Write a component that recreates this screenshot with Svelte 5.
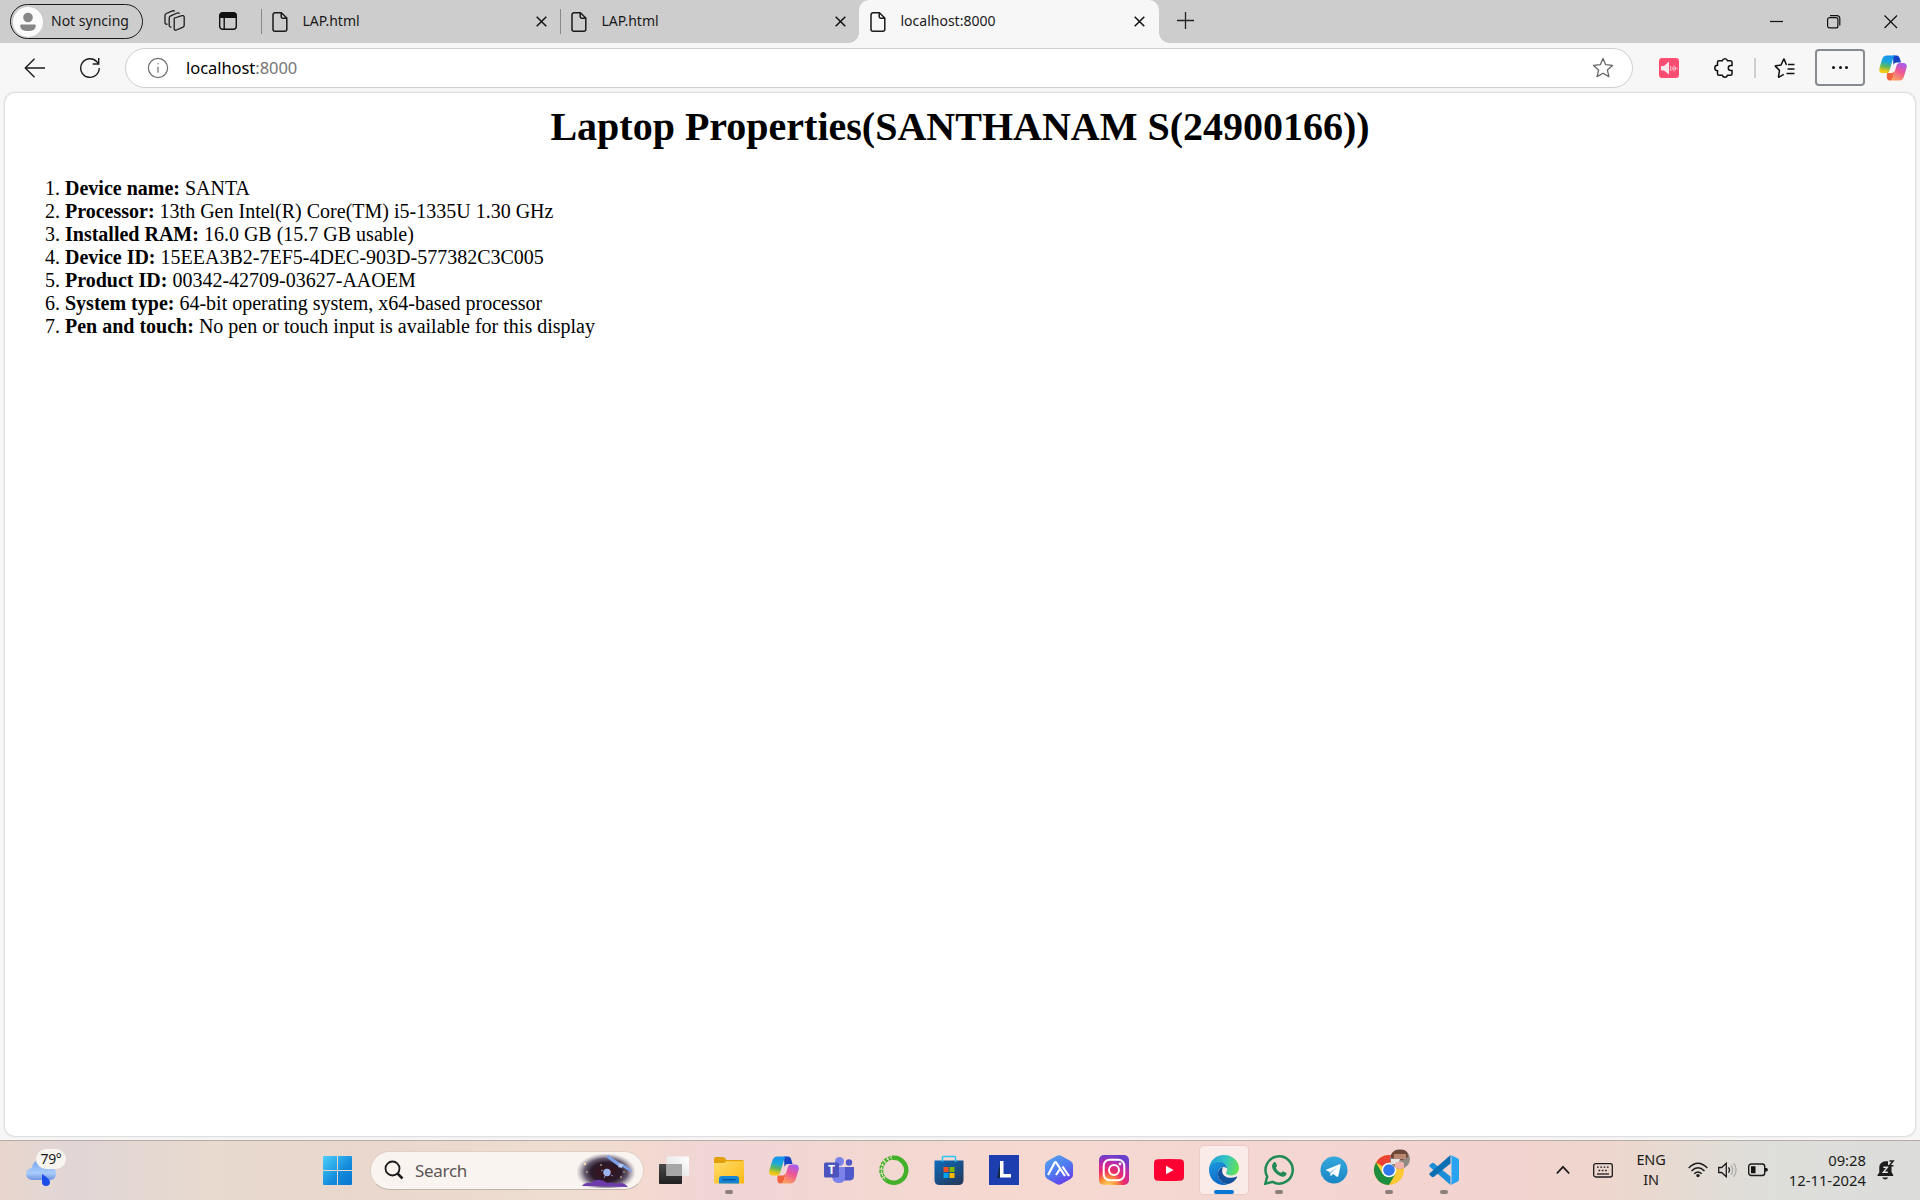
<script>
  const tabs = [
    { title: 'LAP.html', active: false },
    { title: 'LAP.html', active: false },
    { title: 'localhost:8000', active: true }
  ];

  const properties = [
    ['Device name:', 'SANTA'],
    ['Processor:', '13th Gen Intel(R) Core(TM) i5-1335U 1.30 GHz'],
    ['Installed RAM:', '16.0 GB (15.7 GB usable)'],
    ['Device ID:', '15EEA3B2-7EF5-4DEC-903D-577382C3C005'],
    ['Product ID:', '00342-42709-03627-AAOEM'],
    ['System type:', '64-bit operating system, x64-based processor'],
    ['Pen and touch:', 'No pen or touch input is available for this display']
  ];

  const apps = [
    { name: 'taskview' },
    { name: 'explorer', running: true },
    { name: 'copilot' },
    { name: 'teams' },
    { name: 'anaconda' },
    { name: 'store' },
    { name: 'letter' },
    { name: 'peak' },
    { name: 'instagram' },
    { name: 'youtube' },
    { name: 'edge', focused: true },
    { name: 'whatsapp', running: true },
    { name: 'telegram' },
    { name: 'chrome', running: true },
    { name: 'vscode', running: true }
  ];
</script>

{#snippet copilot(id)}
  <svg class="copilot" viewBox="0 0 30 28">
    <defs>
      <linearGradient id="{id}a" x1=".5" y1="0" x2=".3" y2="1">
        <stop offset="0" stop-color="#1692f0" /><stop offset=".35" stop-color="#1aa7dc" />
        <stop offset=".62" stop-color="#5bb85e" /><stop offset=".9" stop-color="#f5c912" />
      </linearGradient>
      <linearGradient id="{id}b" x1=".7" y1="0" x2=".3" y2="1">
        <stop offset="0" stop-color="#a45cf0" /><stop offset=".45" stop-color="#ee5696" />
        <stop offset="1" stop-color="#ffa35c" />
      </linearGradient>
    </defs>
    <path d="M15 .5h4c2 0 2.800 1.400 3.400 3.400L23.600 8H19c-2 0-3 1-3.600 3z" fill="#1744c4" />
    <path d="M8.500 19.500h6L17 17l-2.400 8c-.7 1.700-1.500 2.500-3.200 2.500-2 0-2.600-1.500-3.100-3.200z" fill="#f4633b" />
    <path d="M8.500.5H18c-1.800.3-2.500 2-3 3.600l-3.800 12.500c-.6 2-1.500 2.900-3.600 2.900H4c-3.600 0-4.500-2.500-3.400-6L3.300 4.700C4.200 2 5.600.5 8.500.5z" fill="url(#{id}a)" />
    <path d="M21.500 27.500H12c1.800-.3 2.500-2 3-3.600l3.800-12.500c.6-2 1.500-2.900 3.600-2.900H26c3.600 0 4.500 2.500 3.400 6l-2.700 8.800c-.9 2.700-2.300 4.200-5.200 4.200z" fill="url(#{id}b)" />
  </svg>
{/snippet}

{#snippet doc()}
  <svg class="doc" viewBox="0 0 16 20"><path d="M3 .8h6.400L14.800 6v11.200a2 2 0 0 1-2 2H3a2 2 0 0 1-2-2V2.800a2 2 0 0 1 2-2zM9.200 1v3.600a1.600 1.600 0 0 0 1.600 1.600h3.800" /></svg>
{/snippet}

{#snippet appIcon(name)}
  {#if name === 'taskview'}
    <svg viewBox="0 0 30 30">
      <defs>
        <linearGradient id="tvd" x1="0" y1="0" x2="0" y2="1"><stop offset="0" stop-color="#494949" /><stop offset="1" stop-color="#202020" /></linearGradient>
        <linearGradient id="tvl" x1="1" y1="0" x2="0" y2="1"><stop offset="0" stop-color="#fff" /><stop offset="1" stop-color="#ddd" /></linearGradient>
      </defs>
      <rect x="0" y="9" width="23" height="20" rx="1" fill="url(#tvd)" />
      <rect x="7.500" y="1.500" width="22.500" height="19.500" rx="1" fill="url(#tvl)" />
      <path d="M7.500 9H23v12H7.500z" fill="#a7a7a7" />
    </svg>
  {:else if name === 'explorer'}
    <svg viewBox="0 0 30 30">
      <defs><linearGradient id="fold" x1="0" y1="0" x2="1" y2="1"><stop offset="0" stop-color="#ffdc6e" /><stop offset="1" stop-color="#fdb90f" /></linearGradient></defs>
      <path d="M0 4q0-2 2-2h7q2 0 3.500 3H28q2 0 2 2v3H0z" fill="#e1a00c" />
      <path d="M0 8h10l2-1.800h18v22.300H0z" fill="url(#fold)" />
      <path d="M5 28.500V24q0-3 3-3h14q3 0 3 3v4.500z" fill="#1585d8" />
      <path d="M8.500 24.700h13" stroke="#074f96" stroke-width="1.300" />
    </svg>
  {:else if name === 'copilot'}
    {@render copilot('task')}
  {:else if name === 'teams'}
    <svg viewBox="0 0 30 30">
      <circle cx="15.500" cy="6.500" r="4.500" fill="#7b83eb" /><circle cx="25" cy="7.500" r="3.200" fill="#5059c9" />
      <path d="M19 12h11v9q0 4-4 4.500h-7z" fill="#5059c9" />
      <path d="M8 12h13v10q0 6-6 6t-7-6z" fill="#7b83eb" />
      <rect y="7.500" width="15" height="15" rx="1.500" fill="#4b53bc" />
      <text x="7.500" y="19.300" class="teams-t">T</text>
    </svg>
  {:else if name === 'anaconda'}
    <svg viewBox="0 0 30 30" fill="none">
      <path d="M13 2.800A12.500 12.500 0 1 1 7 25" stroke="#43b02a" stroke-width="4.500" />
      <path d="M7 25A12.500 12.500 0 0 1 13 2.800" stroke="#43b02a" stroke-width="4" stroke-dasharray="3.200 1" />
      <path d="M6 24A13 13 0 0 1 12 2.500" stroke="#e9e9ce" stroke-width="1.100" stroke-dasharray="2 1.600" />
    </svg>
  {:else if name === 'store'}
    <svg viewBox="0 0 30 30">
      <defs><linearGradient id="store" x1="0" y1="0" x2=".8" y2="1"><stop offset="0" stop-color="#0d6cbd" /><stop offset="1" stop-color="#243a5e" /></linearGradient></defs>
      <path d="M.5 5.500h29V25q0 5-5 5h-19q-5 0-5-5z" fill="url(#store)" />
      <path d="M8.500 7V2.500Q8.500 1.500 9.500 1.500h11q1 0 1 1V7" fill="none" stroke="#29c3f5" stroke-width="1.500" />
      <path d="M9.500 12h5v5h-5z" fill="#f25022" /><path d="M15.500 12h5v5h-5z" fill="#7fba00" />
      <path d="M9.500 18h5v5h-5z" fill="#00a4ef" /><path d="M15.500 18h5v5h-5z" fill="#ffb900" />
    </svg>
  {:else if name === 'letter'}
    <svg viewBox="0 0 30 30">
      <path d="M0 0h30v30H0z" fill="#1d3eae" /><path d="M11.500 6v17H8z" fill="#10283f" />
      <path d="M11 6h3.500v13H22v3.500H11z" fill="#fff" />
    </svg>
  {:else if name === 'peak'}
    <svg viewBox="0 0 30 30">
      <defs><linearGradient id="peak" x1=".2" y1="0" x2=".8" y2="1"><stop offset="0" stop-color="#55a0ee" /><stop offset=".5" stop-color="#4f79f0" /><stop offset="1" stop-color="#6a35e8" /></linearGradient></defs>
      <path d="M12.500 1q2.500-1.400 5 0l9 5Q29 7.500 29 10v10q0 2.500-2.500 4l-9 5q-2.500 1.400-5 0l-9-5Q1 22.500 1 20V10q0-2.500 2.500-4z" fill="url(#peak)" />
      <path d="M4 20 10.500 8q1-1.700 2 0L21 21M12 20l4-6M18.500 11.500l6.500 9.500" fill="none" stroke="#fff" stroke-width="2.200" />
    </svg>
  {:else if name === 'instagram'}
    <svg viewBox="0 0 30 30">
      <defs>
        <radialGradient id="ig" cx=".3" cy="1.050" r="1.050"><stop offset="0" stop-color="#ffdb73" /><stop offset=".25" stop-color="#fd9a35" /><stop offset=".5" stop-color="#ee2d66" /><stop offset=".75" stop-color="#c32aa3" /><stop offset="1" stop-color="#6840cd" /></radialGradient>
      </defs>
      <rect width="30" height="30" rx="5" fill="url(#ig)" />
      <rect x="4.700" y="4.700" width="20.600" height="20.600" rx="6" fill="none" stroke="#fff" stroke-width="2" />
      <circle cx="15" cy="15" r="5" fill="none" stroke="#fff" stroke-width="2" /><circle cx="21" cy="9" r="1.400" fill="#fff" />
    </svg>
  {:else if name === 'youtube'}
    <svg viewBox="0 0 30 30"><path d="M4 4.300q11-.6 22 0 4 .2 4 4v13.400q0 3.800-4 4-11 .6-22 0-4-.2-4-4V8.300q0-3.800 4-4z" fill="#ff0033" /><path d="M12 10.700v8.600l7.500-4.300z" fill="#fff" /></svg>
  {:else if name === 'edge'}
    <svg viewBox="0 0 30 30">
      <defs>
        <linearGradient id="eg1" x1="0" y1=".4" x2="1" y2=".6"><stop offset="0" stop-color="#259fdb" /><stop offset=".5" stop-color="#32c4c5" /><stop offset="1" stop-color="#66e34d" /></linearGradient>
        <linearGradient id="eg2" x1="0" y1="0" x2=".5" y2="1"><stop offset="0" stop-color="#209be0" /><stop offset="1" stop-color="#0a66c4" /></linearGradient>
      </defs>
      <path d="M0 14C1 5 7 0 15 0c9 0 15 6.500 15 13 0 4.500-3.500 7.500-7.500 7.500-3 0-5.500-1-5.500-2.500 0-1 1.200-1.500 1.200-4C18 10.500 14.500 8 10 8 5 8 1.500 11 0 14z" fill="url(#eg1)" />
      <path d="M0 15c0-4.500 4.500-8 10-8 5 0 8 3.500 8 6.500-1-1-2.500-1.500-4-1.500-3 0-5 3-5 7 0 6 5 10.500 10 10-1.300.6-2.500 1-4 1C6 30 0 23 0 15z" fill="url(#eg2)" />
      <path d="M14 12.100c-3 .7-5 3.500-5 7C9 25 14 29.600 19 29c4-.5 7-3.500 9-6.600.3-.6-.2-1-.8-.7-5.500 2.700-13.500.5-14-5-.1-2 .2-3 .8-4.600z" fill="#12519d" />
    </svg>
  {:else if name === 'whatsapp'}
    <svg viewBox="0 0 30 30">
      <path d="M1.300 28.700 3.200 21.500A13.600 13.600 0 1 1 8.600 26.900z" fill="none" stroke="#1f8a55" stroke-width="2.500" />
      <path d="M9.700 7.500c.8-.7 1.700-.6 2.100.3l1.200 2.800c.3.800-1.300 1.900-1 2.600 1 2.100 2.700 3.700 4.800 4.600.8.300 1.700-1.800 2.500-1.400l2.800 1.400c.7.400.4 1.900-.4 2.700-1.400 1.400-3.600 1.600-5.700.6-3.600-1.600-6.300-4.500-7.500-7.500-.9-2.500-.4-4.700 1.200-6.100z" fill="#1f8a55" />
    </svg>
  {:else if name === 'telegram'}
    <svg viewBox="0 0 30 30">
      <defs><linearGradient id="tg" x1="0" y1="0" x2="0" y2="1"><stop offset="0" stop-color="#35a9dd" /><stop offset="1" stop-color="#1b85c4" /></linearGradient></defs>
      <circle cx="15" cy="15" r="13.500" fill="url(#tg)" />
      <path d="M6.500 15 20.500 9.200q1.300-.4 1.100 1L19.300 21q-.4 1.300-1.600.6l-3.600-2.700-1.900 1.900-.7.100-.8-4z" fill="#fff" />
      <path d="m10.700 17 8-5-6 5.600-1.200 3.300z" fill="#9fd0ea" />
    </svg>
  {:else if name === 'chrome'}
    <svg class="overflowing" viewBox="0 0 30 30">
      <defs><clipPath id="face"><circle cx="26" cy="4" r="10" /></clipPath></defs>
      <circle cx="15" cy="15" r="15" fill="#fcc934" />
      <path d="M15 15 2 7.500A15 15 0 0 1 28 7.500H15z" fill="#ea4335" />
      <path d="M2 7.500A15 15 0 0 0 15 30l6.500-11.200L15 15l-6.500 3.800z" fill="#1e8e3e" />
      <circle cx="15" cy="15" r="7.300" fill="#fff" /><circle cx="15" cy="15" r="5.800" fill="#2f78ed" />
      <g clip-path="url(#face)">
        <path d="M16-6h20v20H16z" fill="#8f8984" />
        <path d="M17-5h16l1 7-6 3-11-2z" fill="#704838" /><path d="M20-1h12v5H20z" fill="#b98672" />
        <path d="M17 4h9l-2 5h-7z" fill="#e8e4e2" /><path d="M21 8q5-3 9 0v6h-9z" fill="#efb1ac" />
      </g>
    </svg>
  {:else}
    <svg viewBox="0 0 30 30">
      <path d="M3 8 0.700 10q-1 .9 0 1.800L21.500 30v-8.500L5 8.300q-1-.8-2-.3z" fill="#1d8fd8" />
      <path d="m3 22-2.300-2q-1-.9 0-1.800L21.500 0v8.500L5 21.700q-1 .8-2 .3z" fill="#0b70b3" />
      <path d="M21.500 0 28.500 3.200Q30 4 30 5.500v19q0 1.500-1.500 2.300L21.500 30q1-1 1-3V3q0-2-1-3z" fill="#27a3f1" />
    </svg>
  {/if}
{/snippet}

<div class="screen">
  <header class="tabstrip">
    <button class="profile">
      <svg viewBox="0 0 30 30"><circle cx="15" cy="15" r="15" fill="#fbfbfb" /><circle cx="15" cy="10.500" r="4.800" fill="#878787" /><path d="M8 17.500h14q.8 0 .8 1 0 5.500-7.800 5.500t-7.800-5.500q0-1 .8-1z" fill="#878787" /></svg>
      <span>Not syncing</span>
    </button>
    <svg class="workspaces" viewBox="0 0 22 22">
      <g transform="translate(0 .5)"><path d="M10.500 7.500 18 5.200q2-.5 2.200 1.300v8.300q0 1.300-1.200 1.900l-6.500 2.800q-2 .7-2.300-1.200V9q0-1.100.3-1.500z" />
      <path d="M7.500 16.500q-2.200.4-2.300-1.500V7.500q0-1.500 1.500-2.200l6.500-2.800q1.600-.6 2.200.8" />
      <path d="M3.500 13.700Q1 14 1 12V5q0-1.300 1.300-2L8.500.4q1.500-.5 2.200.6" /></g>
    </svg>
    <svg class="tabmenu" viewBox="0 0 18 18"><rect x=".7" y=".7" width="16.600" height="16.600" rx="3" /><path d="M1 5.200h16M5.200 5v12" /><path class="solid" d="M.5 5.200V3q0-2.500 2.500-2.500h12q2.500 0 2.500 2.500v2.200z" /></svg>

    <div class="tabs">
      {#each tabs as tab}
        <div class="tab" class:active={tab.active}>
          {@render doc()}
          <span>{tab.title}</span>
          <svg class="close" viewBox="0 0 11 11"><path d="m.7.7 9.600 9.600M10.300.7.7 10.300" /></svg>
        </div>
      {/each}
    </div>
    <svg class="plus" viewBox="0 0 17 17"><path d="M8.500 0v17M0 8.500h17" /></svg>

    <div class="window-controls">
      <svg viewBox="0 0 14 14"><path d="M0 6.500h13" /></svg>
      <svg viewBox="0 0 14 14"><rect x=".6" y="2.600" width="10.300" height="10.300" rx="2" /><path d="M3 .6h6.800q3 0 3 3v6.900" /></svg>
      <svg viewBox="0 0 14 14"><path d="m.5.500 12.500 12.500M13 .5.500 13" /></svg>
    </div>
  </header>

  <nav class="toolbar">
    <svg class="back" viewBox="0 0 22 22"><path d="M21 11H1.500M10.500 1.700 1.300 11l9.200 9.300" /></svg>
    <svg class="reload" viewBox="0 0 22 22"><path d="M20.300 11A9.300 9.300 0 1 1 17.900 4.800L19.500 6.600M19.700 1v6h-6" /></svg>
    <div class="address">
      <svg class="info" viewBox="0 0 22 22"><circle cx="11" cy="11" r="9.600" /><path d="M11 9.800v6" /><circle class="dot" cx="11" cy="6.700" r=".7" /></svg>
      <span class="url">localhost<em>:8000</em></span>
      <svg class="star" viewBox="0 0 22 22"><path d="m11 1.500 2.700 6.200 6.800.7-5.100 4.500 1.500 6.700-5.900-3.400-5.900 3.400 1.500-6.700-5.100-4.500 6.800-.7z" /></svg>
    </div>
    <svg class="audio" viewBox="0 0 20 20"><rect width="20" height="20" rx="3" fill="#ff4d72" /><path d="M2 8h3l5-4.500v13L5 12.500H2z" fill="#f5e9ed" /><path d="M11.700 8v5M13.300 9.200v2.600M15 7.500v6M16.500 9v3M18 9.800v1.400" stroke="#ffc6d1" stroke-width="1" /></svg>
    <svg class="puzzle" viewBox="0 0 20 22"><path d="M5 3.800h3.300a2.700 2.700 0 0 1 5.200 0h3a1.500 1.500 0 0 1 1.500 1.500v3.200h-1.200a2.500 2.500 0 0 0 0 5H18v3.300a1.500 1.500 0 0 1-1.500 1.500h-3a2.700 2.700 0 0 1-5.200 0H5a1.500 1.500 0 0 1-1.500-1.500v-3.100a2.700 2.700 0 0 1 0-5.400v-3A1.500 1.500 0 0 1 5 3.800z" /></svg>
    <i class="divider"></i>
    <svg class="favorites" viewBox="0 0 22 22"><path d="m12.500 8-2.300-5.600q-.3-.6-.6 0L7 8l-5.300.7q-.7.200-.2.700l4 4-1 6.300q0 .6.500.4l4.800-2.800M14 7.500h6.500M13.500 12h7M12.500 16.500h8" /></svg>
    <button class="more" aria-label="More"><i></i><i></i><i></i></button>
    {@render copilot('bar')}
  </nav>

  <main>
    <h1>Laptop Properties(SANTHANAM S(24900166))</h1>
    <ol>
      {#each properties as [label, value]}
        <li><b>{label}</b> {value}</li>
      {/each}
    </ol>
  </main>

  <footer>
    <div class="weather">
      <svg viewBox="0 0 30 32">
        <defs><linearGradient id="cl" x1="0" y1="0" x2="0" y2="1"><stop offset="0" stop-color="#76a4ed" /><stop offset=".65" stop-color="#a9ccfb" /><stop offset="1" stop-color="#7094df" /></linearGradient></defs>
        <path d="M6 25q-6-1-6-6 0-5 6-6Q7 5 15 5t9 7q6 1 6 6.500 0 6-6 6.500z" fill="url(#cl)" />
        <path d="M16 19q8 5 8 8a4 4 0 0 1-8 0z" fill="#1d4de8" />
      </svg>
      <span>79°</span>
    </div>
    <svg class="start" viewBox="0 0 29 29">
      <defs><linearGradient id="win" x1="0" y1="0" x2="1" y2="1"><stop offset="0" stop-color="#4bd0fb" /><stop offset=".6" stop-color="#138adb" /><stop offset="1" stop-color="#0676d2" /></linearGradient></defs>
      <path d="M1 0h13v14H0V1q0-1 1-1zM15 0h13q1 0 1 1v13H15zM0 15h14v14H1q-1 0-1-1zM15 15h14v13q0 1-1 1H15z" fill="url(#win)" />
    </svg>
    <div class="search">
      <svg class="lens" viewBox="0 0 20 20"><circle cx="8.500" cy="8.500" r="7" /><path d="m13.500 13.500 5 5" /></svg>
      <span>Search</span>
      <svg class="space" viewBox="0 0 58 34">
        <defs>
          <radialGradient id="sky"><stop offset="0" stop-color="#3b1212" /><stop offset=".5" stop-color="#2b1a2c" /><stop offset=".72" stop-color="#4d4158" stop-opacity=".85" /><stop offset="1" stop-color="#8c8494" stop-opacity="0" /></radialGradient>
        </defs>
        <ellipse cx="29" cy="18" rx="30" ry="19" fill="url(#sky)" />
        <path d="M5 32q3-4 9-3 4-4 9-3 4 0 7 3 6-1 9 1 7-3 12 3z" fill="#6e3bab" />
        <path d="m29 3 2-2 12 8-2 3zM44 12l2-2 9 6-1 2z" fill="#7fa3e8" /><path d="m42 9 4 1-1 4-4-1z" fill="#b5c7f3" />
        <circle cx="30" cy="18.500" r="3.700" fill="#9cb5ee" /><path d="M26 16l-2 1M34 21l2 1M28 22l-1 2" stroke="#6f8ed8" />
        <g fill="#f5ddb0"><circle cx="8" cy="10" r="1.200" /><circle cx="24" cy="11" r=".8" /><circle cx="10" cy="18" r=".8" /><circle cx="47" cy="18" r=".7" /><circle cx="44" cy="23" r=".8" /></g>
      </svg>
    </div>
    <div class="apps">
      {#each apps as app}
        <div class="app" class:running={app.running} class:focused={app.focused}>{@render appIcon(app.name)}</div>
      {/each}
    </div>
    <div class="tray">
      <svg class="chevron" viewBox="0 0 14 10"><path d="m.8 8.500 6.200-6.700 6.200 6.700" /></svg>
      <svg class="keyboard" viewBox="0 0 20 15"><rect x=".7" y=".7" width="18.600" height="13.300" rx="2" /><path d="M4 4.200h12.500M5.500 7.500h10" stroke-dasharray="1.700 1.600" /><path d="M4 11h12" /></svg>
      <div class="lang">ENG<br />IN</div>
      <svg class="wifi" viewBox="0 0 20 16"><path d="M.7 6Q10-3.500 19.300 6M3.500 9Q10 2.500 16.500 9M6.300 11.800Q10 8.200 13.700 11.800" /><circle cx="10" cy="13.600" r="1.700" /></svg>
      <svg class="volume" viewBox="0 0 20 16"><path d="M.7 5.500h3L8.300 1.200v13.600l-4.600-4.300h-3zM10.500 5.300q2 2.700 0 5.400" /><path class="faint" d="M13 3.300q3.500 4.700 0 9.400M15.600 1.200q5 6.800 0 13.600" /></svg>
      <svg class="battery" viewBox="0 0 20 14"><rect x=".7" y="1" width="16" height="11.500" rx="2.500" /><path class="solid" d="M3 3.300h4.500v7H3zM17 5h1.500q1.300 0 1.300 1.800T18.500 8.500H17z" /></svg>
      <div class="clock">09:28<br />12-11-2024</div>
      <svg class="bell" viewBox="0 0 18 20"><path d="M2.300 7a6 6 0 0 1 6-5.800H11V5h3.500v7l1.700 3v1H.5v-1l1.800-2.500zM5.200 17.500h6q-1 2-3 2t-3-2z" /><path class="zed" d="M6.300 7.300h4.200l-4.200 5h4.500" /><path class="zed-small" d="M12.400 1h3.700l-3.700 4.800h4" /></svg>
    </div>
  </footer>
</div>

<style>
  :global(body) { margin: 0; }
  .screen { width: 1920px; height: 1200px; display: flex; flex-direction: column; background: #f7f7f7; color: #000; font-family: 'Noto Sans', 'Open Sans', sans-serif; overflow: hidden; }
  svg { display: block; flex: none; fill: none; }
  button { font: inherit; box-sizing: border-box; padding: 0; background: none; }

  .tabstrip { height: 43px; flex: none; display: flex; align-items: flex-start; background: #cdcdcd; color: #1a1a1a; font-size: 14px; }
  .profile { margin: 4px 0 0 10px; width: 133px; height: 35px; border: 1.5px solid #1b1b1b; border-radius: 18px; display: flex; align-items: center; gap: 8px; padding-left: 2px; color: #1a1a1a; white-space: nowrap; }
  .profile svg { width: 30px; height: 30px; }
  .profile span { line-height: 20px; margin-top: -2px; }
  .workspaces { width: 22px; height: 22px; margin: 10px 0 0 21px; stroke: #1b1b1b; stroke-width: 1.3; }
  .tabmenu { width: 18px; height: 18px; margin: 12px 0 0 33px; stroke: #111; stroke-width: 1.4; }
  .solid { fill: #111; stroke: none; }
  .tabs { display: flex; margin-left: 24px; }
  .tab { width: 299px; height: 43px; display: flex; align-items: center; box-sizing: border-box; padding: 0 13px 0 11px; background: linear-gradient(#8a8a8a, #8a8a8a) 0 9px / 1px 25px no-repeat; }
  .tab.active { position: relative; width: 300px; background: #f7f7f7; border-radius: 10px 10px 0 0; padding-right: 14px; }
  .tab.active::before, .tab.active::after { content: ''; position: absolute; bottom: 0; width: 10px; height: 10px; }
  .tab.active::before { left: -10px; background: radial-gradient(circle at 0 0, transparent 9.500px, #f7f7f7 10px); }
  .tab.active::after { right: -10px; background: radial-gradient(circle at 100% 0, transparent 9.500px, #f7f7f7 10px); }
  .tab span { flex: 1; margin-left: 14.500px; line-height: 20px; margin-top: -2px; }
  .doc { width: 16px; height: 20px; stroke: #1b1b1b; stroke-width: 1.5; }
  .close { width: 11px; height: 11px; stroke: #111; stroke-width: 1.5; }
  .plus { width: 17px; height: 17px; margin: 12px 0 0 18px; stroke: #222; stroke-width: 1.3; }
  .window-controls { margin: 15px 22px 0 auto; display: flex; gap: 43px; stroke: #111; stroke-width: 1.2; }
  .window-controls svg { width: 14px; height: 14px; }

  .toolbar { height: 50px; flex: none; display: flex; align-items: center; box-sizing: border-box; padding: 0 13px 0 24px; }
  .back, .reload { width: 22px; height: 22px; stroke: #1b1b1b; stroke-width: 1.4; margin-bottom: 1px; }
  .reload { margin-left: 33px; }
  .address { width: 1508px; height: 40px; margin-left: 24px; box-sizing: border-box; border: 1px solid #cfcfcf; border-radius: 20px; background: #fff; display: flex; align-items: center; }
  .info { width: 22px; height: 22px; margin-left: 20.500px; stroke: #6e6e6e; stroke-width: 1.2; }
  .info .dot { fill: #666; stroke: none; }
  .url { flex: 1; margin: -1px 0 0 17.500px; font-size: 16.500px; letter-spacing: -.05px; }
  .url em { font-style: normal; color: #767676; }
  .star { width: 22px; height: 22px; margin-right: 18.500px; stroke: #666; stroke-width: 1.3; stroke-linejoin: round; }
  .audio { width: 20px; height: 20px; margin-left: 26px; }
  .puzzle { width: 20px; height: 22px; margin-left: 35px; stroke: #111; stroke-width: 1.5; margin-bottom: 1px; }
  .divider { width: 2px; height: 20px; background: #cecece; margin-left: 20px; }
  .favorites { width: 22px; height: 22px; margin-left: 18px; stroke: #111; stroke-width: 1.5; stroke-linejoin: round; }
  .more { width: 50px; height: 37px; border: 2px solid #868b92; border-radius: 4px; margin: 0 0 1px 19px; display: flex; align-items: center; justify-content: center; gap: 3.500px; }
  .more i { width: 3px; height: 3px; border-radius: 50%; background: #111; }
  .copilot { width: 30px; height: 28px; }
  .toolbar .copilot { width: 28px; height: 26px; margin-left: 14px; }

  main { flex: 1; margin: 0 5px 4px; background: #fff; border-radius: 10px; box-shadow: 0 0 2px 1px rgba(0, 0, 0, .12); box-sizing: border-box; padding: 11px 10px 10px; font-family: 'Liberation Serif', 'Times New Roman', serif; }
  h1 { margin: 0; font-size: 40px; line-height: 46px; text-align: center; }
  ol { margin: 27px 0 0; padding-left: 50px; font-size: 20px; line-height: 23px; }

  footer { height: 60px; flex: none; box-sizing: border-box; border-top: 1px solid #b5aca8; display: flex; align-items: center; color: #1c1c1c;
    background: linear-gradient(90deg, #e8d6cd 0, #e1d6d6 75px, #e8dacf 210px, #ead7ce 380px, #eeddd0 560px, #f3d9d0 640px, #efd5d6 720px, #f3d8d1 900px, #f6d9d1 1060px, #f4d6d2 1240px, #f3d3cf 1520px, #edd7ce 1620px, #e3dcd4 1700px, #dededb 1770px, #dcdcda 1920px); }
  .weather { position: relative; width: 40px; height: 46px; margin-left: 26px; flex: none; }
  .weather svg { width: 30px; height: 32px; margin-top: 7px; }
  .weather span { position: absolute; left: 10px; top: 1px; width: 30px; height: 20px; border-radius: 10px; background: #f8f4ef; font-size: 14px; line-height: 20px; text-align: center; letter-spacing: -.3px; }
  .start { width: 29px; height: 29px; margin-left: 257px; }
  .search { width: 274px; height: 39px; margin-left: 18px; flex: none; box-sizing: border-box; border: 1px solid #e2d0c7; border-bottom-color: #c5b4ae; border-radius: 20px; background: #faf4f1; display: flex; align-items: center; font-size: 17px; color: #5a5654; }
  .lens { width: 20px; height: 20px; margin: 0 0 1px 12.500px; stroke: #1c1c1c; stroke-width: 1.8; }
  .lens path { stroke-width: 2.500; }
  .search span { flex: 1; margin: -1px 0 0 11.500px; letter-spacing: -.3px; }
  .space { width: 58px; height: 34px; margin-right: 8px; }
  .apps { display: flex; gap: 7px; margin: 0 0 1px 6px; }
  .app { position: relative; width: 48px; height: 48px; display: flex; align-items: center; justify-content: center; border-radius: 4px; }
  .app svg { width: 30px; height: 30px; }
  .app .copilot { height: 28px; }
  .overflowing { overflow: visible; }
  .running::after, .focused::after { content: ''; position: absolute; bottom: 0; left: 20px; width: 8px; height: 4px; border-radius: 2px; background: #8b7e7b; }
  .focused { background: #faebe9; box-shadow: 0 0 1px 1px rgba(150, 100, 90, .1); }
  .focused::after { left: 14px; width: 20px; background: #0a78d4; }
  :global(.teams-t) { font: bold 12px 'Noto Sans', sans-serif; fill: #fff; text-anchor: middle; }

  .tray { display: flex; align-items: center; margin: 0 0 1px auto; padding-right: 25px; stroke: #1c1c1c; font-size: 14.500px; line-height: 20px; }
  .chevron { width: 14px; height: 10px; stroke-width: 1.8; }
  .keyboard { width: 20px; height: 15px; margin-left: 23px; stroke-width: 1.3; }
  .lang { width: 40px; margin-left: 18px; text-align: center; stroke: none; position: relative; top: -1px; letter-spacing: -.2px; }
  .wifi { width: 20px; height: 16px; margin-left: 17px; stroke-width: 1.5; }
  .wifi circle { fill: #1c1c1c; stroke: none; }
  .volume { width: 20px; height: 16px; margin-left: 10px; stroke-width: 1.3; }
  .faint { stroke: #adadab; }
  .battery { width: 20px; height: 14px; margin-left: 10px; stroke-width: 1.4; }
  .clock { width: 88px; margin-left: 10px; text-align: right; stroke: none; white-space: nowrap; font-size: 14.800px; }
  .bell { width: 18px; height: 20px; margin: 0 0 0 11px; fill: #1c1c1c; stroke: none; overflow: visible; }
  .zed { fill: none; stroke: #e0e0dd; stroke-width: 1.400; }
  .zed-small { fill: none; stroke: #1c1c1c; stroke-width: 1.500; }
</style>
